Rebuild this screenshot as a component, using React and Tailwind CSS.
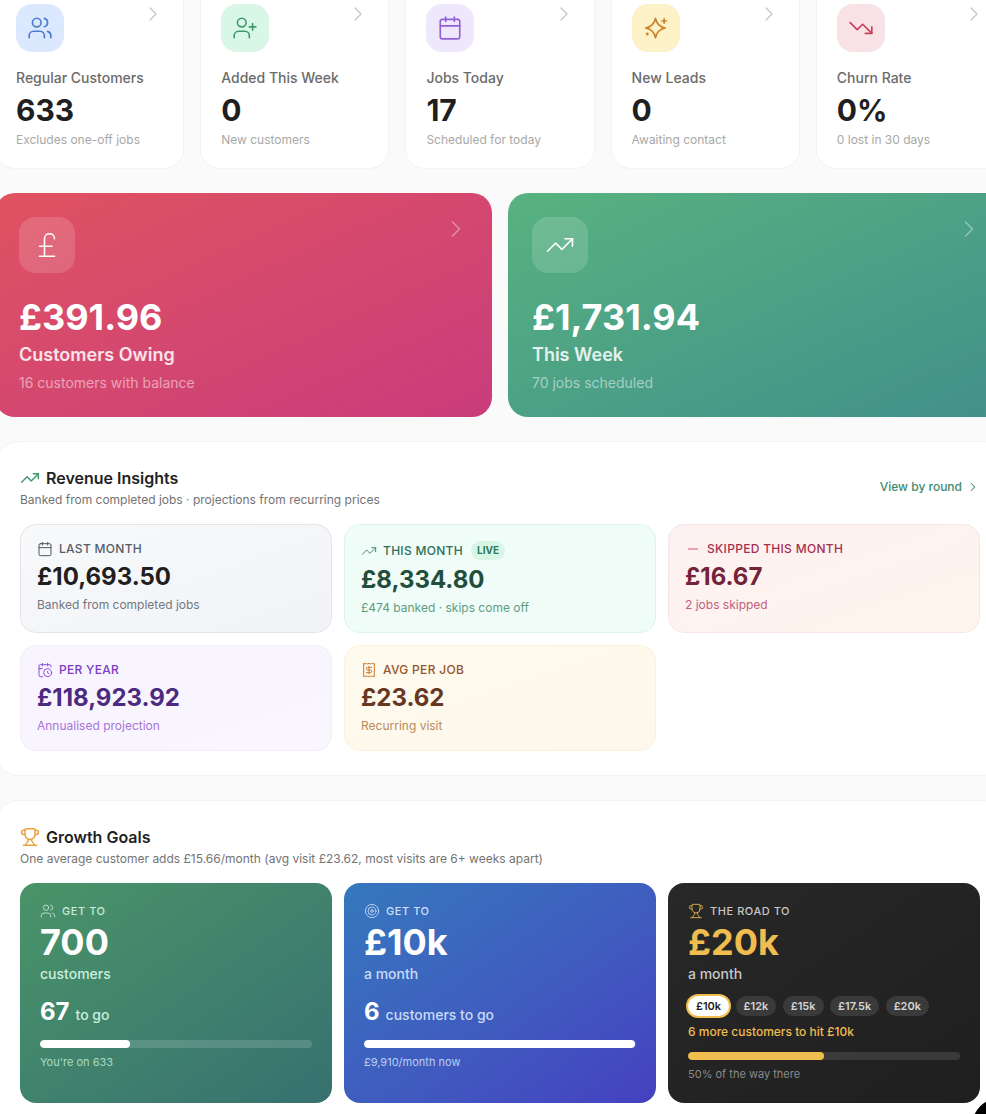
import React from "react";
import {
  Calendar,
  CalendarClock,
  ChevronRight,
  Minus,
  PoundSterling,
  Receipt,
  Target,
  TrendingDown,
  TrendingUp,
  Trophy,
  UserPlus,
  Users,
} from "lucide-react";

// lucide's sparkles has a bigger dot than the one in the picture
function Sparkle({ size, strokeWidth }) {
  return (
    <svg width={size} height={size} viewBox="0 0 24 24" fill="none" stroke="currentColor" strokeWidth={strokeWidth} strokeLinecap="round" strokeLinejoin="round">
      <path d="M11.5 3 C12.4 8.2 14.9 10.8 20.5 12 C14.9 13.2 12.4 15.8 11.5 21 C10.6 15.8 8.1 13.2 2.5 12 C8.1 10.8 10.6 8.2 11.5 3Z" />
      <path d="M19.5 3.5v4" />
      <path d="M21.5 5.5h-4" />
      <circle cx="4" cy="17.5" r="0.6" fill="currentColor" />
    </svg>
  );
}

const TOP_CARDS = [
  { icon: Users, tile: "bg-[#dbe8fd] text-[#4a7bd0]", label: "Regular Customers", value: "633", sub: "Excludes one-off jobs" },
  { icon: UserPlus, tile: "bg-[#d9f7e6] text-[#3f9a6e]", label: "Added This Week", value: "0", sub: "New customers" },
  { icon: Calendar, tile: "bg-[#efe8fd] text-[#9060d8]", label: "Jobs Today", value: "17", sub: "Scheduled for today" },
  { icon: Sparkle, tile: "bg-[#fdf1c7] text-[#c9822f]", label: "New Leads", value: "0", sub: "Awaiting contact" },
  { icon: TrendingDown, tile: "bg-[#f8e2e5] text-[#c74058]", label: "Churn Rate", value: "0%", sub: "0 lost in 30 days" },
];

const STATS = [
  {
    icon: Calendar,
    label: "Last Month",
    value: "£10,693.50",
    sub: "Banked from completed jobs",
    box: "border-[#e3e5e9] from-[#f8f9fa] to-[#f1f3f7]",
    iconColor: "text-[#4b5563]",
    labelColor: "text-[#565d68]",
    valueColor: "text-[#1f1f1f]",
    subColor: "text-[#737880]",
  },
  {
    icon: TrendingUp,
    label: "This Month",
    live: true,
    value: "£8,334.80",
    sub: "£474 banked · skips come off",
    box: "border-[#dcf5e9] from-[#f0fdf8] to-[#effcf7]",
    iconColor: "text-[#3f8f6c]",
    labelColor: "text-[#2f6f57]",
    valueColor: "text-[#234d3c]",
    subColor: "text-[#5f9c84]",
  },
  {
    icon: Minus,
    label: "Skipped This Month",
    value: "£16.67",
    sub: "2 jobs skipped",
    box: "border-[#f8e6e7] from-[#fdf1f1] to-[#fef5ed]",
    iconColor: "text-[#d9566c]",
    labelColor: "text-[#a8304f]",
    valueColor: "text-[#74233a]",
    subColor: "text-[#c25f7e]",
  },
  {
    icon: CalendarClock,
    label: "Per Year",
    value: "£118,923.92",
    sub: "Annualised projection",
    box: "border-[#f2ecfb] from-[#f8f4fe] to-[#faf6fe]",
    iconColor: "text-[#8b4fd8]",
    labelColor: "text-[#7a3cc4]",
    valueColor: "text-[#4c2a80]",
    subColor: "text-[#a673d8]",
  },
  {
    icon: Receipt,
    label: "Avg Per Job",
    value: "£23.62",
    sub: "Recurring visit",
    box: "border-[#fbf2dd] from-[#fefaee] to-[#fef8ec]",
    iconColor: "text-[#c9782f]",
    labelColor: "text-[#94562a]",
    valueColor: "text-[#66381f]",
    subColor: "text-[#b98a5c]",
  },
];

const PILLS = ["£10k", "£12k", "£15k", "£17.5k", "£20k"];

function TopCard({ icon: Icon, tile, label, value, sub }) {
  return (
    <div className="relative rounded-[20px] border border-[#f3f3f3] bg-white p-5">
      <ChevronRight className="absolute top-[18px] right-[18px] text-[#c4c4c4]" size={24} strokeWidth={1.25} />
      <div className={`flex h-12 w-12 items-center justify-center rounded-2xl ${tile}`}>
        <Icon size={26} strokeWidth={1.5} />
      </div>
      <div className="mt-4 text-sm font-medium leading-5 text-[#6b6b6b]">{label}</div>
      <div className="mt-1 text-3xl leading-9 font-bold text-[#1f1f1f]">{value}</div>
      <div className="mt-1 text-xs leading-4 text-[#a8a8a8]">{sub}</div>
    </div>
  );
}

function HeroCard({ icon: Icon, gradient, value, label, sub }) {
  return (
    <div className={`relative rounded-[20px] bg-gradient-to-br p-6 text-white ${gradient}`}>
      <ChevronRight className="absolute top-[22px] right-[22px] text-white/40" size={28} strokeWidth={1.25} />
      <div className="flex h-14 w-14 items-center justify-center rounded-2xl bg-white/15">
        <Icon size={30} strokeWidth={1.25} />
      </div>
      <div className="mt-6 text-4xl leading-10 font-bold">{value}</div>
      <div className="mt-1 text-lg leading-7 font-semibold text-white/85">{label}</div>
      <div className="mt-1 text-sm leading-5 text-white/50">{sub}</div>
    </div>
  );
}

function StatCard({ icon: Icon, label, live, value, sub, box, iconColor, labelColor, valueColor, subColor }) {
  return (
    <div className={`rounded-2xl border bg-gradient-to-br p-4 ${box}`}>
      <div className="flex items-center gap-1.5">
        <Icon className={iconColor} size={16} strokeWidth={1.5} />
        <span className={`text-xs leading-4 font-medium tracking-wide uppercase ${labelColor}`}>{label}</span>
        {live && (
          <span className="ml-0.5 rounded-full bg-[#d8f6e6] px-1.5 py-0.5 text-[10px] leading-[15px] font-bold text-[#2f7a5a]">LIVE</span>
        )}
      </div>
      <div className={`mt-1 text-2xl leading-8 font-bold ${valueColor}`}>{value}</div>
      <div className={`mt-1 text-xs leading-4 ${subColor}`}>{sub}</div>
    </div>
  );
}

function GoalLabel({ icon: Icon, text, iconColor, textColor }) {
  return (
    <div className="flex items-center gap-1.5">
      <Icon className={iconColor} size={16} strokeWidth={1.25} />
      <span className={`text-[11px] leading-4 font-medium tracking-wider uppercase ${textColor}`}>{text}</span>
    </div>
  );
}

function GoalCard({ icon, gradient, value, unit, left, leftText, percent, caption, unitColor, labelColor, captionColor }) {
  return (
    <div className={`rounded-2xl bg-gradient-to-br p-5 text-white ${gradient}`}>
      <GoalLabel icon={icon} text="Get to" iconColor={labelColor} textColor={labelColor} />
      <div className="mt-[3px] text-4xl leading-10 font-bold">{value}</div>
      <div className={`mt-0.5 text-sm leading-5 font-medium ${unitColor}`}>{unit}</div>
      <div className="mt-3 flex items-baseline gap-1.5">
        <span className="text-2xl leading-8 font-bold">{left}</span>
        <span className={`text-sm font-medium ${unitColor}`}>{leftText}</span>
      </div>
      <div className="mt-3 h-2 overflow-hidden rounded-full bg-white/15">
        <div className="h-full rounded-full bg-white" style={{ width: `${percent}%` }} />
      </div>
      <div className={`mt-1.5 text-[11px] leading-4 ${captionColor}`}>{caption}</div>
    </div>
  );
}

export default function App() {
  return (
    <div className="relative h-[1114px] w-[986px] overflow-hidden bg-[#fafafa] font-[Inter,sans-serif]">
      <div className="-mt-[17px] -ml-[5px] flex w-[1010px] flex-col gap-6">
        <div className="grid grid-cols-5 gap-4">
          {TOP_CARDS.map((card) => (
            <TopCard key={card.label} {...card} />
          ))}
        </div>

        <div className="grid grid-cols-2 gap-4">
          <HeroCard
            icon={PoundSterling}
            gradient="from-[#e0525f] to-[#c93c7c]"
            value="£391.96"
            label="Customers Owing"
            sub="16 customers with balance"
          />
          <HeroCard
            icon={TrendingUp}
            gradient="from-[#58b27f] to-[#41908a]"
            value="£1,731.94"
            label="This Week"
            sub="70 jobs scheduled"
          />
        </div>

        <section className="rounded-3xl border border-[#f3f3f3] bg-white p-6">
          <div className="flex items-center justify-between">
            <div>
              <div className="flex items-center gap-1.5">
                <TrendingUp className="text-[#3f9a6e]" size={20} strokeWidth={1.75} />
                <h2 className="text-base leading-6 font-semibold text-[#1f1f1f]">Revenue Insights</h2>
              </div>
              <p className="mt-0.5 text-xs leading-4 text-[#737373]">Banked from completed jobs · projections from recurring prices</p>
            </div>
            <div className="flex items-center gap-1 text-xs font-medium text-[#3f8a6c]">
              View by round
              <ChevronRight size={14} strokeWidth={1.75} />
            </div>
          </div>
          <div className="mt-4 grid grid-cols-3 gap-3">
            {STATS.map((stat) => (
              <StatCard key={stat.label} {...stat} />
            ))}
          </div>
        </section>

        <section className="rounded-3xl border border-[#f3f3f3] bg-white p-6">
          <div className="flex items-center gap-1.5">
            <Trophy className="text-[#e8a33d]" size={20} strokeWidth={1.75} />
            <h2 className="text-base leading-6 font-semibold text-[#1f1f1f]">Growth Goals</h2>
          </div>
          <p className="mt-0.5 text-xs leading-4 text-[#737373]">One average customer adds £15.66/month (avg visit £23.62, most visits are 6+ weeks apart)</p>
          <div className="mt-4 grid grid-cols-3 gap-3">
            <GoalCard
              icon={Users}
              gradient="from-[#4a9468] to-[#377170]"
              value="700"
              unit="customers"
              left="67"
              leftText="to go"
              percent={33}
              caption="You're on 633"
              unitColor="text-[#cdeedd]"
              labelColor="text-[#c9ecd9]"
              captionColor="text-[#a9dcc4]"
            />
            <GoalCard
              icon={Target}
              gradient="from-[#3578bd] to-[#4540c0]"
              value="£10k"
              unit="a month"
              left="6"
              leftText="customers to go"
              percent={99.6}
              caption="£9,910/month now"
              unitColor="text-[#c8dcf8]"
              labelColor="text-[#cfe0f8]"
              captionColor="text-[#b8cff2]"
            />
            <div className="rounded-2xl bg-gradient-to-br from-[#282828] to-[#1f1f1f] p-5 pb-[21px]">
              <GoalLabel icon={Trophy} text="The road to" iconColor="text-[#f0bd4f]" textColor="text-[#c8c8c8]" />
              <div className="mt-[3px] text-4xl leading-10 font-bold text-[#f0bd4f]">£20k</div>
              <div className="mt-0.5 text-sm leading-5 font-medium text-[#c8c8c8]">a month</div>
              <div className="mt-3 flex gap-[6.5px]">
                {PILLS.map((pill, i) => (
                  <span
                    key={pill}
                    className={
                      i === 0
                        ? "rounded-full bg-white px-2 text-[11px] leading-5 font-semibold text-[#1f1f1f] ring-2 ring-[#f0bd4f]"
                        : "rounded-full bg-[#3a3a3a] px-2 text-[11px] leading-5 font-semibold text-[#d4d4d4]"
                    }
                  >
                    {pill}
                  </span>
                ))}
              </div>
              <div className="mt-2 text-xs leading-4 font-medium text-[#f0bd4f]">6 more customers to hit £10k</div>
              <div className="mt-3 h-2 overflow-hidden rounded-full bg-[#3a3a3a]">
                <div className="h-full rounded-full bg-[#f0bd4f]" style={{ width: "50%" }} />
              </div>
              <div className="mt-1.5 text-[11px] leading-4 text-[#8a8a8a]">50% of the way there</div>
            </div>
          </div>
        </section>
      </div>

      {/* floating button, mostly off screen */}
      <div className="absolute top-[1098px] left-[972px] h-14 w-14 rounded-full bg-black" />
    </div>
  );
}
